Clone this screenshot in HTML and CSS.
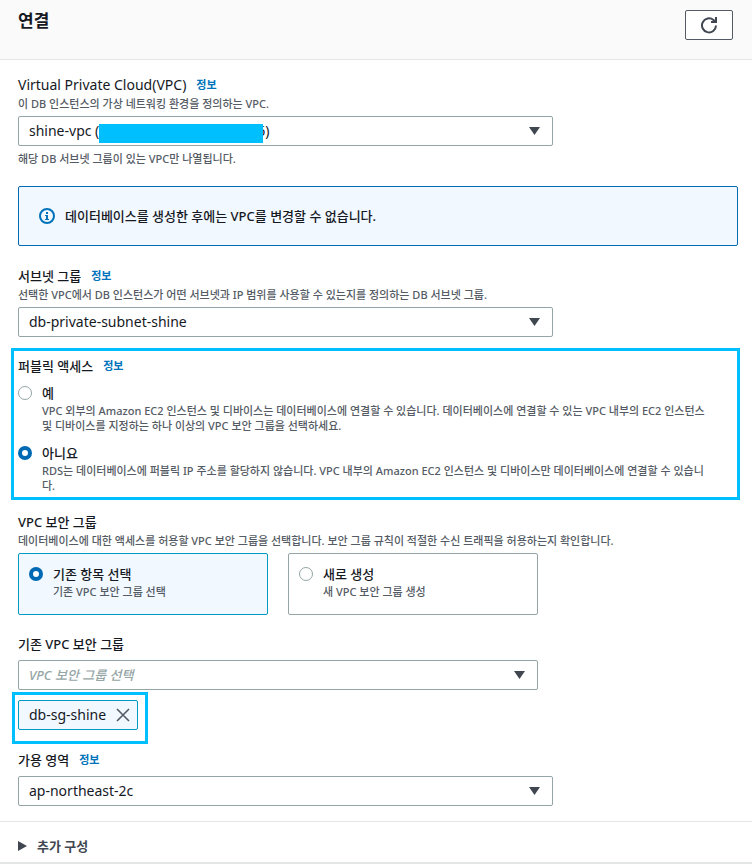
FILE: index.html
```html
<!DOCTYPE html>
<html lang="ko">
<head>
<meta charset="utf-8">
<meta name="viewport" content="width=device-width, initial-scale=1">
<title>연결</title>
<link rel="stylesheet" href="styles.css">
</head>
<body>
<header class="panel-header">
  <h1>연결</h1>
  <button class="refresh" type="button" aria-label="새로 고침">
    <svg viewBox="0 0 18 18" width="18" height="18" aria-hidden="true"><path d="M16 9.500A7 7 0 1 1 13.500 4L15 5.200" fill="none" stroke="currentColor" stroke-width="2"/><path d="M15 1H17V7H11V5H13.500L15 3.500Z" fill="currentColor"/></svg>
  </button>
</header>
<main class="panel-body">
  <section class="field">
    <div class="label-row"><label class="latin" for="vpc">Virtual Private Cloud(VPC)</label><a href="#">정보</a></div>
    <p class="hint">이 DB 인스턴스의 가상 네트워킹 환경을 정의하는 VPC.</p>
    <div class="select">
      <select id="vpc" class="latin"><option>shine-vpc (v&emsp;&emsp;&emsp;&emsp;&emsp;&emsp;&emsp;&emsp;&emsp;&emsp;&nbsp;&nbsp;&nbsp;6)</option></select>
      <span class="redaction"></span>
      <svg class="caret" viewBox="0 0 11 8" aria-hidden="true"><path d="M0 0H11L5.500 8Z"/></svg>
    </div>
    <p class="hint below">해당 DB 서브넷 그룹이 있는 VPC만 나열됩니다.</p>
  </section>

  <div class="alert">
    <svg viewBox="0 0 16 16" width="16" height="16" aria-hidden="true"><circle cx="8" cy="8" r="7" fill="none" stroke="currentColor" stroke-width="2"/><path d="M7 4H9V6H7ZM6 7H9V11H10V12H6V11H7V8H6Z" fill="currentColor"/></svg>
    <span>데이터베이스를 생성한 후에는 VPC를 변경할 수 없습니다.</span>
  </div>

  <section class="field">
    <div class="label-row"><label for="subnet">서브넷 그룹</label><a href="#">정보</a></div>
    <p class="hint">선택한 VPC에서 DB 인스턴스가 어떤 서브넷과 IP 범위를 사용할 수 있는지를 정의하는 DB 서브넷 그룹.</p>
    <div class="select">
      <select id="subnet" class="latin"><option>db-private-subnet-shine</option></select>
      <svg class="caret" viewBox="0 0 11 8" aria-hidden="true"><path d="M0 0H11L5.500 8Z"/></svg>
    </div>
  </section>

  <section class="marked access" role="radiogroup" aria-labelledby="access-label">
    <div class="label-row"><span id="access-label">퍼블릭 액세스</span><a href="#">정보</a></div>
    <div class="choice">
      <input type="radio" id="public-yes" name="public">
      <label for="public-yes"><span class="title">예</span><span class="hint">VPC 외부의 Amazon EC2 인스턴스 및 디바이스는 데이터베이스에 연결할 수 있습니다. 데이터베이스에 연결할 수 있는 VPC 내부의 EC2 인스턴스 및 디바이스를 지정하는 하나 이상의 VPC 보안 그룹을 선택하세요.</span></label>
    </div>
    <div class="choice">
      <input type="radio" id="public-no" name="public" checked>
      <label for="public-no"><span class="title">아니요</span><span class="hint">RDS는 데이터베이스에 퍼블릭 IP 주소를 할당하지 않습니다. VPC 내부의 Amazon EC2 인스턴스 및 디바이스만 데이터베이스에 연결할 수 있습니다.</span></label>
    </div>
  </section>

  <section class="field" role="radiogroup" aria-labelledby="sg-label">
    <div class="label-row"><span id="sg-label">VPC 보안 그룹</span></div>
    <p class="hint">데이터베이스에 대한 액세스를 허용할 VPC 보안 그룹을 선택합니다. 보안 그룹 규칙이 적절한 수신 트래픽을 허용하는지 확인합니다.</p>
    <div class="tiles">
      <div class="choice tile selected">
        <input type="radio" id="sg-existing" name="sg" checked>
        <label for="sg-existing"><span class="title">기존 항목 선택</span><span class="hint">기존 VPC 보안 그룹 선택</span></label>
      </div>
      <div class="choice tile">
        <input type="radio" id="sg-new" name="sg">
        <label for="sg-new"><span class="title">새로 생성</span><span class="hint">새 VPC 보안 그룹 생성</span></label>
      </div>
    </div>
  </section>

  <section class="field groups">
    <div class="label-row"><label for="groups">기존 VPC 보안 그룹</label></div>
    <div class="select narrow">
      <select id="groups" class="placeholder"><option>VPC 보안 그룹 선택</option></select>
      <svg class="caret" viewBox="0 0 11 8" aria-hidden="true"><path d="M0 0H11L5.500 8Z"/></svg>
    </div>
  </section>
  <div class="marked tokens">
    <span class="token latin">db-sg-shine
      <button type="button" aria-label="db-sg-shine 제거"><svg viewBox="0 0 14 14" width="14" height="14" aria-hidden="true"><path d="M1 1L13 13M13 1L1 13" fill="none" stroke="currentColor" stroke-width="1.600"/></svg></button>
    </span>
  </div>

  <section class="field zone">
    <div class="label-row"><label for="zone">가용 영역</label><a href="#">정보</a></div>
    <div class="select">
      <select id="zone" class="latin"><option>ap-northeast-2c</option></select>
      <svg class="caret" viewBox="0 0 11 8" aria-hidden="true"><path d="M0 0H11L5.500 8Z"/></svg>
    </div>
  </section>
</main>
<details class="extra">
  <summary><svg viewBox="0 0 9 10" width="9" height="10" aria-hidden="true"><path d="M0 0L9 5L0 10Z" fill="currentColor"/></svg>추가 구성</summary>
</details>
</body>
</html>
```
FILE: styles.css
```css
* { box-sizing: border-box; }

body {
  margin: 0;
  background: #fff;
  color: #16191f;
  font: 500 13px/20px "Noto Sans", "Noto Sans CJK KR", sans-serif;
}

p, h1 { margin: 0; }
button, select { font: inherit; color: inherit; }
svg { display: block; flex: none; }
.latin, .select .latin { font-size: 14px; font-weight: 400; }

.panel-header {
  display: flex;
  justify-content: space-between;
  align-items: flex-start;
  padding: 10px 19px 19px 18px;
  background: #fafafa;
  border-bottom: 1px solid #e4e6e6;
}

h1 { font-size: 17px; line-height: 22px; font-weight: 700; }

.refresh {
  display: flex;
  align-items: center;
  justify-content: center;
  width: 48px;
  height: 30px;
  padding: 0;
  color: #414750;
  background: #fff;
  border: 1px solid #545b64;
  border-radius: 2px;
}

.panel-body { padding: 15px 14px 15px 18px; }

.label-row { display: flex; align-items: center; gap: 10px; height: 21px; padding-bottom: 2px; }
.label-row a {
  color: #0073bb;
  font-size: 11px;
  font-weight: 700;
  text-decoration: none;
}

.hint { color: #545b64; font-size: 11px; line-height: 15px; }
.below { margin-top: 5px; }

.select { position: relative; max-width: 535px; margin-top: 5px; }
.narrow { max-width: 520px; }
.select select {
  display: block;
  width: 100%;
  height: 30px;
  padding: 0 30px 0 10px;
  appearance: none;
  background: #fff;
  border: 1px solid #95a5a6;
  border-radius: 2px;
}
.select .placeholder { color: #95a5a6; font-style: italic; }
.caret {
  position: absolute;
  top: 11px;
  right: 13px;
  width: 11px;
  height: 8px;
  fill: #414750;
  pointer-events: none;
}
.redaction {
  position: absolute;
  top: 8px;
  left: 81px;
  width: 164px;
  height: 19px;
  background: #00bfff;
}

.alert {
  display: flex;
  align-items: center;
  gap: 10px;
  min-height: 60px;
  margin: 20px 0;
  padding: 0 20px;
  background: #f1f8ff;
  border: 1px solid #0069b4;
  border-radius: 2px;
}
.alert svg { color: #0073bb; }

.marked { border: 3px solid #00bfff; }
.access { margin: 11px -2px 12px -7px; padding: 5px 25px 4px 4px; }

.choice { display: flex; align-items: flex-start; gap: 10px; }
.access .choice { margin-top: 6px; }
.access .choice + .choice { margin-top: 10px; }
.choice label { flex: 1; }
.choice .title, .choice .hint { display: block; }
.choice input {
  appearance: none;
  flex: none;
  width: 14px;
  height: 14px;
  margin: 3px 0;
  background: #fff;
  border: 1px solid #95a5a6;
  border-radius: 50%;
}
.choice input:checked { border: 4px solid #0069b4; }

.tiles {
  display: grid;
  grid-template-columns: 1fr 1fr;
  gap: 20px;
  max-width: 520px;
  margin-top: 5px;
}
.tile {
  min-height: 62px;
  padding: 10px;
  border: 1px solid #95a5a6;
  border-radius: 2px;
}
.selected { background: #f1f8ff; border-color: #0099c3; }

.groups { margin-top: 19px; }

.tokens { width: fit-content; margin: 2px 0 6px -6px; padding: 5px 7px 11px 3px; }
.token {
  display: flex;
  align-items: center;
  gap: 10px;
  height: 30px;
  padding: 0 7px 0 10px;
  background: #f1f8ff;
  border: 1px solid #0099c3;
  border-radius: 2px;
}
.token button {
  padding: 0;
  color: #545b64;
  background: none;
  border: 0;
}

.extra { border-top: 1px solid #e4e6e6; border-bottom: 2px solid #e4e6e6; }
.extra summary {
  display: flex;
  align-items: center;
  gap: 10px;
  height: 40px;
  padding: 8px 18px 0;
  color: #414750;
  font-weight: 700;
  list-style: none;
}
```
